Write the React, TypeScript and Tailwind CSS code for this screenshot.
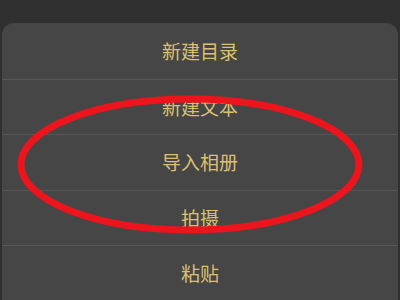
import React from "react";

const items = ["新建目录", "新建文本", "导入相册", "拍摄", "粘贴"];

export default function App() {
  return (
    <div
      className="relative w-[400px] h-[300px] overflow-hidden bg-[#303030]"
      style={{ fontFamily: '"Noto Sans CJK SC", "Noto Sans", sans-serif' }}
    >
      <div className="pt-[23px] px-[2px]">
        <div className="rounded-t-[12px] bg-[#464646] flex flex-col">
          {items.map((t, i) => (
            <div
              key={t}
              className={`h-[55.5px] flex items-center justify-center text-[19px] text-[#dcc071] ${
                i > 0 ? "border-t border-[#575757]" : ""
              }`}
            >
              {t}
            </div>
          ))}
        </div>
      </div>
      <svg
        className="absolute left-0 top-0 pointer-events-none"
        width="400"
        height="300"
        viewBox="0 0 400 300"
      >
        <ellipse
          cx="190"
          cy="164.5"
          rx="169"
          ry="65.5"
          fill="none"
          stroke="#ec141d"
          strokeWidth="7"
        />
      </svg>
    </div>
  );
}
